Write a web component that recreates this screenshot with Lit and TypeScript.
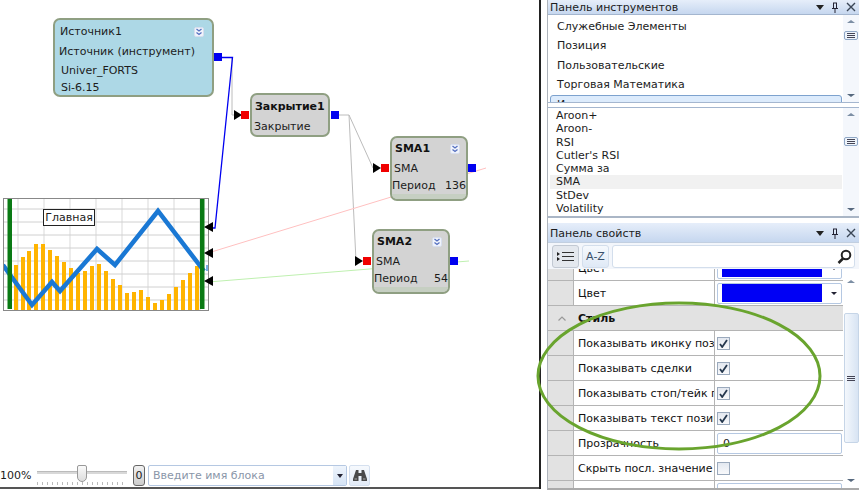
import { LitElement, html, css, svg } from "lit";
import { customElement } from "lit/decorators.js";

const BARS = [
  [16, 265], [23, 257], [29, 251], [36, 244], [43, 244], [50, 250], [57, 256], [64, 262],
  [71, 268], [78, 273], [85, 271], [92, 266], [99, 264], [106, 271], [113, 279], [120, 285],
  [127, 293], [134, 292], [141, 290], [148, 297], [155, 303], [162, 300], [169, 294],
  [176, 287], [183, 280], [190, 273], [197, 266],
];

const chevrons = html`<span class="chev">
  <svg width="8" height="8" viewBox="0 0 8 8">
    <path d="M1.5 1l2.5 2 2.5-2M1.5 4.5l2.5 2 2.5-2" fill="none" stroke="#5570c0" stroke-width="1.3" />
  </svg>
</span>`;

const scrollLines = html`<svg width="8" height="5" viewBox="0 0 8 5">
  <path d="M0 .5h8M0 2.5h8M0 4.5h8" stroke="#445" stroke-width="1" />
</svg>`;

@customElement("app-root")
export class AppRoot extends LitElement {
  static styles = css`
    :host {
      display: flex;
      width: 859px;
      height: 490px;
      overflow: hidden;
      position: relative;
      background: #fff;
      font-family: "DejaVu Sans", sans-serif;
      font-size: 11px;
      color: #1c1c1c;
    }

    /* left side: free diagram canvas */
    .canvas {
      width: 539px;
      height: 489px;
      flex: none;
      position: relative;
      display: flex;
      flex-direction: column;
      border-right: 2px solid #222;
      box-sizing: content-box;
    }
    .wires {
      position: absolute;
      left: 0;
      top: 0;
    }
    .node {
      position: absolute;
      box-sizing: border-box;
      border: 2px solid #8f9f82;
      border-radius: 7px;
      background: #d3d3d3;
      display: flex;
      flex-direction: column;
    }
    .node.source {
      left: 53px;
      top: 18px;
      width: 161px;
      height: 79px;
      background: #add8e6;
      padding: 5px 3px 0;
    }
    .source .row:nth-child(2) {
      margin-top: 7px;
    }
    .source .row:nth-child(3) {
      margin-top: 6px;
    }
    .source .row:nth-child(4) {
      margin-top: 4px;
    }
    .node.close {
      left: 250px;
      top: 93px;
      width: 80px;
      height: 44px;
      padding: 5px 2px 0;
      gap: 7px;
    }
    .node.sma {
      width: 78px;
      height: 65px;
      padding: 4px 0 0;
    }
    .sma .row:nth-child(2) {
      margin-top: 7px;
    }
    .sma .row:nth-child(3) {
      margin-top: 4px;
    }
    .sma1 {
      left: 390px;
      top: 136px;
    }
    .sma2 {
      left: 372px;
      top: 229px;
    }
    .strip {
      height: 5px;
      margin: auto 0 0;
      background: #c6cfc2;
      border-radius: 0 0 5px 5px;
    }
    .row {
      display: flex;
      justify-content: space-between;
      align-items: center;
      line-height: 13px;
      height: 13px;
      white-space: nowrap;
    }
    .node b {
      font-weight: bold;
      color: #111;
    }
    .ind-1 {
      padding-left: 1px;
    }
    .ind-2 {
      padding-left: 2px;
    }
    .ind-3 {
      padding-left: 3px;
    }
    .chev {
      width: 10px;
      height: 10px;
      box-sizing: border-box;
      border: 1px solid #d7deee;
      border-radius: 2px;
      background: #f1f4fb;
      display: inline-flex;
      align-items: center;
      justify-content: center;
      margin-right: 5px;
    }
    .sma .chev {
      margin-right: 6px;
    }
    .port {
      position: absolute;
      width: 8px;
      height: 8px;
    }
    .port.out {
      background: #0000f0;
    }
    .port.in {
      background: #f00000;
    }

    .chart {
      position: absolute;
      left: 3px;
      top: 198px;
      width: 206px;
      height: 113px;
      box-sizing: border-box;
      border: 1px solid #888;
      background: #fff;
    }
    .tag {
      position: absolute;
      left: 39px;
      top: 10px;
      width: 52px;
      height: 17px;
      box-sizing: border-box;
      border: 1px solid #222;
      background: #fff;
      text-align: center;
      line-height: 15px;
      font-size: 11px;
    }

    /* zoom and search bar at the bottom of the canvas */
    .toolbar {
      margin-top: auto;
      height: 21px;
      display: flex;
      align-items: center;
      border-bottom: 2px solid #555;
      padding-bottom: 1px;
      position: relative;
    }
    .zoom {
      width: 37px;
      font-size: 11px;
    }
    .slider {
      width: 90px;
      height: 21px;
      position: relative;
    }
    .track {
      position: absolute;
      left: 0;
      right: 0;
      top: 6px;
      height: 2px;
      background: #d8d8d8;
      border-top: 1px solid #bbb;
    }
    .ticks {
      position: absolute;
      left: 0;
      right: 0;
      bottom: 1px;
      height: 3px;
      background: repeating-linear-gradient(90deg, #bbb 0 1px, transparent 1px 5px);
    }
    .thumb {
      position: absolute;
      left: 40px;
      top: 0;
      width: 10px;
      height: 17px;
      box-sizing: border-box;
      border: 1px solid #999;
      border-radius: 2px 2px 5px 5px;
      background: linear-gradient(#fafafa, #ddd);
    }
    .zero {
      margin-left: 6px;
      width: 12px;
      height: 21px;
      box-sizing: border-box;
      border: 1px solid #666;
      border-radius: 3px;
      background: linear-gradient(#f2f2f2, #ccc);
      display: flex;
      align-items: center;
      justify-content: center;
      font-size: 11px;
    }
    .combo {
      margin-left: 3px;
      width: 199px;
      height: 21px;
      box-sizing: border-box;
      border: 1px solid #b5c8e2;
      border-radius: 2px;
      display: flex;
      align-items: center;
      color: #8a96a8;
      padding-left: 4px;
    }
    .combo span {
      flex: 1;
    }
    .combo i {
      width: 13px;
      height: 19px;
      background: linear-gradient(#eef4fc, #d6e4f5);
      display: flex;
      align-items: center;
      justify-content: center;
    }
    .find {
      margin-left: 2px;
      width: 21px;
      height: 21px;
      box-sizing: border-box;
      border: 1px solid #d5e0ef;
      border-radius: 2px;
      background: linear-gradient(#f6f9fd, #e2ebf7);
      display: flex;
      align-items: center;
      justify-content: center;
    }

    /* right side: docked panels */
    .side {
      flex: 1;
      min-width: 0;
      height: 488px;
      margin-left: 6px;
      display: flex;
      flex-direction: column;
      position: relative;
      border-left: 1px solid #aeb4bc;
      border-bottom: 2px solid #aaa;
    }
    .title {
      display: flex;
      align-items: center;
      justify-content: space-between;
      box-sizing: border-box;
      background: linear-gradient(#e6eefa, #c6d7ef);
      padding: 0 3px 0 2px;
      flex: none;
      font-size: 11px;
    }
    .t1 {
      height: 15px;
      border-bottom: 1px solid #a4b6cf;
    }
    .t2 {
      height: 20px;
      border-bottom: 1px solid #c2cfe0;
      margin-top: 5px;
      padding-top: 1px;
    }
    .btns {
      display: flex;
      align-items: center;
      gap: 7px;
    }
    .list {
      display: flex;
      flex: none;
      overflow: hidden;
    }
    .l1 {
      height: 87px;
      border-bottom: 1px solid #a4b6cf;
    }
    .l2 {
      height: 108px;
      margin-top: 4px;
      border-top: 1px solid #a4b6cf;
      border-bottom: 2px solid #aab6c6;
    }
    .items {
      flex: 1;
      min-width: 0;
      overflow: hidden;
      padding: 2px 1px 0 2px;
    }
    .l1 .item {
      height: 19.4px;
      line-height: 19px;
      padding-left: 7px;
      box-sizing: border-box;
    }
    .l1 .item.cur {
      border: 1px solid #7da2ce;
      border-radius: 3px;
      background: #dcebfc;
      line-height: 17px;
      padding-left: 6px;
    }
    .l2 .item {
      height: 13.3px;
      line-height: 13px;
      padding-left: 6px;
    }
    .l2 .items {
      padding-top: 1px;
    }
    .l2 .item.cur {
      background: #f1f1f1;
    }
    .bar {
      width: 16px;
      flex: none;
      display: flex;
      flex-direction: column;
      align-items: center;
      background: #f4f7fc;
      padding: 5px 0 5px;
      box-sizing: border-box;
    }
    .arrow {
      width: 0;
      height: 0;
      border-left: 4px solid transparent;
      border-right: 4px solid transparent;
    }
    .arrow.up {
      border-bottom: 3px solid #7c8ea4;
    }
    .arrow.down {
      border-top: 3px solid #56687e;
      margin-top: auto;
    }
    .handle {
      width: 14px;
      height: 9px;
      box-sizing: border-box;
      border: 1px solid #8fa7c6;
      border-radius: 2px;
      background: #eef4fb;
      display: flex;
      align-items: center;
      justify-content: center;
      margin-top: 8px;
    }
    .tools {
      height: 26px;
      flex: none;
      display: flex;
      align-items: center;
      gap: 3px;
      padding-left: 4px;
      padding-right: 4px;
      background: #f3f6fb;
      box-sizing: border-box;
    }
    .tool {
      width: 27px;
      height: 23px;
      box-sizing: border-box;
      border: 1px solid #d3deec;
      border-radius: 3px;
      background: linear-gradient(#f6f9fd, #dfe9f6);
      display: flex;
      align-items: center;
      justify-content: center;
      color: #39506b;
    }
    .tool.on {
      background: #e4e8ee;
      border-color: #c2c9d3;
    }
    .search {
      flex: 1;
      height: 23px;
      box-sizing: border-box;
      border: 1px solid #d3deec;
      border-radius: 3px;
      background: #fff;
      display: flex;
      align-items: center;
      justify-content: flex-end;
      padding-right: 2px;
    }

    /* property grid */
    .grid {
      flex: 1;
      min-height: 0;
      display: flex;
      overflow: hidden;
    }
    .cells {
      flex: 1;
      min-width: 0;
      overflow: hidden;
      margin-top: -13px;
    }
    .prop {
      height: 25px;
      display: grid;
      grid-template-columns: 25px 142px 1fr;
      box-sizing: border-box;
      border-bottom: 1px solid #b4b4b4;
    }
    .prop > .gut {
      background: #e2e2e2;
    }
    .prop > .name {
      border-left: 1px solid #b4b4b4;
      border-right: 1px solid #b4b4b4;
      padding-left: 4px;
      display: flex;
      align-items: center;
      overflow: hidden;
      white-space: nowrap;
      color: #111;
    }
    .prop > .val {
      display: flex;
      align-items: center;
      padding-left: 2px;
      padding-right: 1px;
    }
    .cat {
      height: 25px;
      background: #e2e2e2;
      display: flex;
      align-items: center;
      font-weight: bold;
      box-sizing: border-box;
      border-bottom: 1px solid #b4b4b4;
      color: #111;
    }
    .cat svg {
      margin: 0 0 0 10px;
    }
    .cat span {
      margin-left: 12px;
    }
    .box {
      width: 13px;
      height: 13px;
      box-sizing: border-box;
      border: 1px solid #9aa9bc;
      background: linear-gradient(#e3e8f0, #f8f9fb);
      display: flex;
      align-items: center;
      justify-content: center;
    }
    .input {
      flex: 1;
      height: 21px;
      box-sizing: border-box;
      border: 1px solid #b5c8e2;
      border-radius: 2px;
      padding-left: 5px;
      display: flex;
      align-items: center;
    }
    .swatch {
      flex: 1;
      height: 21px;
      box-sizing: border-box;
      border: 1px solid #b5c8e2;
      border-radius: 2px;
      display: flex;
      align-items: center;
      padding-left: 4px;
    }
    .swatch i {
      width: 100px;
      height: 18px;
      background: #0000f5;
    }
    .swatch b {
      width: 0;
      height: 0;
      margin-left: 9px;
      border-left: 3px solid transparent;
      border-right: 3px solid transparent;
      border-top: 3px solid #223;
    }
    .grid .bar {
      background: #fff;
      padding-top: 11px;
      padding-bottom: 6px;
    }
    .grid .handle {
      height: 130px;
      width: 15px;
      margin-top: 30px;
      background: linear-gradient(90deg, #f3f7fc, #d8e4f3);
      border-color: #c6d5e7;
    }
    .ring {
      position: absolute;
      left: 530px;
      top: 295px;
      pointer-events: none;
    }
  `;

  private titleButtons() {
    return html`<span class="btns">
      <svg width="8" height="5" viewBox="0 0 8 5"><path d="M0 0h8L4 5z" fill="#222" /></svg>
      <svg width="8" height="11" viewBox="0 0 8 11">
        <path d="M2 1h4M2.5 1v5M5.5 1v5M1 6.5h6M4 6.5V11" stroke="#223" stroke-width="1" fill="none" />
      </svg>
      <svg width="10" height="10" viewBox="0 0 10 10">
        <path d="M1 1l8 8M9 1l-8 8" stroke="#3a4656" stroke-width="1.4" />
      </svg>
    </span>`;
  }

  private check(on: boolean) {
    return html`<span class="box">
      ${on
        ? html`<svg width="9" height="9" viewBox="0 0 9 9">
            <path d="M1 5l2.2 3L8 1" fill="none" stroke="#26384e" stroke-width="1.8" />
          </svg>`
        : ""}
    </span>`;
  }

  private prop(name: string, value: unknown) {
    return html`<div class="prop">
      <div class="gut"></div>
      <div class="name">${name}</div>
      <div class="val">${value}</div>
    </div>`;
  }

  private wires() {
    const tri = (x: number, y: number) => svg`<path d="M${x} ${y - 5}l8 5-8 5z" fill="#000" />`;
    const triLeft = (x: number, y: number) => svg`<path d="M${x} ${y - 5}l-9 5 9 5z" fill="#000" />`;
    return html`<svg class="wires" width="539" height="465">
      <path d="M232 57V115H236M339 115H349L373 168M349 115L356 261H358" fill="none" stroke="#bcbcbc" stroke-width="1" />
      <path d="M222 57.500H232.500L215 228H206" fill="none" stroke="#0000f0" stroke-width="1.300" />
      <path d="M208 253L486 168" stroke="#ffc0c0" stroke-width="1" />
      <path d="M208 282L469 261" stroke="#bff0b0" stroke-width="1" />
      ${tri(234, 115)} ${tri(373, 168)} ${tri(355, 261)}
    </svg>
    <div class="chart">
      <svg width="204" height="111" viewBox="4 199 204 111">
        ${[18, 44, 70, 96, 122, 148, 174, 200].map(
          (x) => svg`<path d="M${x} 199V310" stroke="#ececec" stroke-width="2" />`
        )}
        ${[209, 222, 235, 248, 261, 274, 287, 300].map(
          (y) => svg`<path d="M4 ${y}H208" stroke="#d0d0d0" stroke-width="1" />`
        )}
        ${BARS.map(
          ([x, top]) => svg`<rect x=${x - 2} y=${top} width="4" height=${310 - top} fill="#ffb400" />`
        )}
        <path
          d="M3 265L32 305L52 282L60 291L97 249L115 265L158 211L204 271"
          fill="none"
          stroke="#1a78d4"
          stroke-width="4.500"
          stroke-linejoin="miter"
        />
        <rect x="206" y="265" width="2" height="6" fill="#1a78d4" opacity=".6" />
        <rect x="7.500" y="199" width="4.500" height="110" fill="#0a7a14" />
        <rect x="200" y="199" width="4.500" height="110" fill="#0a7a14" />
      </svg>
      <div class="tag">Главная</div>
    </div>
    <svg class="wires" width="539" height="465">
      ${triLeft(213, 227)} ${triLeft(213, 253)} ${triLeft(213, 281)}
    </svg>`;
  }

  private nodes() {
    return html`<div class="node source">
        <div class="row ind-2">Источник1 ${chevrons}</div>
        <div class="row ind-1">Источник (инструмент)</div>
        <div class="row ind-3">Univer_FORTS</div>
        <div class="row ind-3">Si-6.15</div>
      </div>
      <div class="port out" style="left:214px;top:53px"></div>

      <div class="port in" style="left:241px;top:111px"></div>
      <div class="node close">
        <div class="row ind-1"><b>Закрытие1</b></div>
        <div class="row">Закрытие</div>
      </div>
      <div class="port out" style="left:331px;top:111px"></div>

      ${this.sma("sma1", "SMA1", "136", 381, 468, 164)} ${this.sma("sma2", "SMA2", "54", 363, 450, 257)}`;
  }

  private sma(cls: string, title: string, period: string, inX: number, outX: number, y: number) {
    return html`<div class="port in" style="left:${inX}px;top:${y}px"></div>
      <div class="node sma ${cls}">
        <div class="row ind-3"><b>${title}</b> ${chevrons}</div>
        <div class="row ind-2">SMA</div>
        <div class="row">Период <span>${period}</span></div>
        <div class="strip"></div>
      </div>
      <div class="port out" style="left:${outX}px;top:${y}px"></div>`;
  }

  private toolbar() {
    return html`<div class="toolbar">
      <span class="zoom">100%</span>
      <div class="slider">
        <div class="track"></div>
        <div class="ticks"></div>
        <div class="thumb"></div>
      </div>
      <div class="zero">0</div>
      <div class="combo">
        <span>Введите имя блока</span>
        <i><svg width="6" height="4" viewBox="0 0 6 4"><path d="M0 0h6L3 4z" fill="#223" /></svg></i>
      </div>
      <div class="find">
        <svg width="14" height="13" viewBox="0 0 14 13">
          <path d="M3 1h2.500v3H8.500V1H11l3 9v2H8.500V7h-3v5H0v-2z" fill="#4a4a4a" />
          <path d="M1.500 10h2.500M10 10h2.500" stroke="#aaa" stroke-width="1" />
        </svg>
      </div>
    </div>`;
  }

  render() {
    return html`
      <div class="canvas">${this.wires()} ${this.nodes()} ${this.toolbar()}</div>
      <div class="side">
        <div class="title t1">Панель инструментов ${this.titleButtons()}</div>
        <div class="list l1">
          <div class="items">
            <div class="item">Служебные Элементы</div>
            <div class="item">Позиция</div>
            <div class="item">Пользовательские</div>
            <div class="item">Торговая Математика</div>
            <div class="item cur">Индикаторы</div>
          </div>
          <div class="bar">
            <span class="arrow up"></span>
            <span class="handle">${scrollLines}</span>
            <span class="arrow down"></span>
          </div>
        </div>
        <div class="list l2">
          <div class="items">
            <div class="item">Aroon+</div>
            <div class="item">Aroon-</div>
            <div class="item">RSI</div>
            <div class="item">Cutler's RSI</div>
            <div class="item">Сумма за</div>
            <div class="item cur">SMA</div>
            <div class="item">StDev</div>
            <div class="item">Volatility</div>
          </div>
          <div class="bar">
            <span class="arrow up"></span>
            <span class="handle" style="margin-top:21px">${scrollLines}</span>
            <span class="arrow down"></span>
          </div>
        </div>
        <div class="title t2">Панель свойств ${this.titleButtons()}</div>
        <div class="tools">
          <div class="tool on">
            <svg width="17" height="11" viewBox="0 0 17 11">
              <path d="M0 1l3 2-3 2zM0 6l3 2-3 2z" fill="#222" />
              <path d="M5 1.500h12M5 5.500h12M5 9.500h12" stroke="#333" stroke-width="1" />
            </svg>
          </div>
          <div class="tool">A-Z</div>
          <div class="search">
            <svg width="15" height="15" viewBox="0 0 15 15">
              <circle cx="9" cy="6" r="4.300" fill="none" stroke="#222" stroke-width="2" />
              <path d="M6 9.500L1.500 14" stroke="#222" stroke-width="2.500" />
            </svg>
          </div>
        </div>
        <div class="grid">
          <div class="cells">
            ${this.prop("Цвет", html`<div class="swatch"><i></i><b></b></div>`)}
            ${this.prop("Цвет", html`<div class="swatch"><i></i><b></b></div>`)}
            <div class="cat">
              <svg width="8" height="5" viewBox="0 0 8 5"><path d="M.5 4.500L4 1l3.500 3.500" fill="none" stroke="#999" stroke-width="1.200" /></svg>
              <span>Стиль</span>
            </div>
            ${this.prop("Показывать иконку позиции", this.check(true))}
            ${this.prop("Показывать сделки", this.check(true))}
            ${this.prop("Показывать стоп/тейк позиции", this.check(true))}
            ${this.prop("Показывать текст позиции", this.check(true))}
            ${this.prop("Прозрачность", html`<div class="input">0</div>`)}
            ${this.prop("Скрыть посл. значение", this.check(false))}
            ${this.prop("", html`<div class="input"></div>`)}
          </div>
          <div class="bar">
            <span class="arrow up"></span>
            <span class="handle">${scrollLines}</span>
            <span class="arrow down"></span>
          </div>
        </div>
      </div>
      <svg class="ring" width="300" height="165" viewBox="530 295 300 165">
        <ellipse cx="679" cy="376" rx="141" ry="73" fill="none" stroke="#69a42e" stroke-width="3" />
      </svg>
    `;
  }
}

declare global {
  interface HTMLElementTagNameMap {
    "app-root": AppRoot;
  }
}
